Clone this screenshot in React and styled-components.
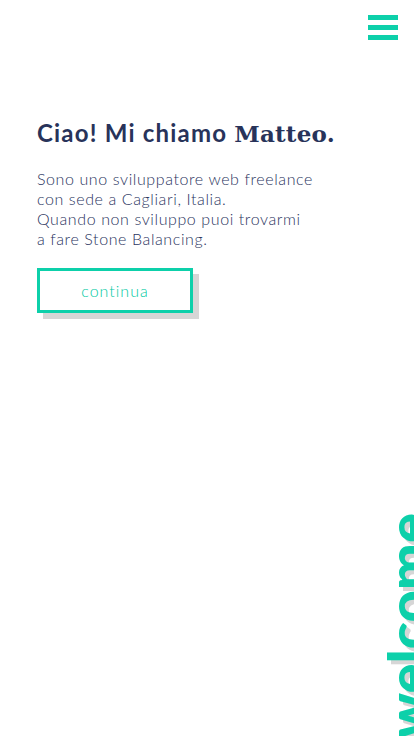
import React from 'react';
import styled, { createGlobalStyle } from 'styled-components';

const teal = '#0dd0aa';
const navy = '#28335a';

const GlobalStyle = createGlobalStyle`
    html, body {
        margin: 0;
        padding: 0;
        background: #ffffff;
        overflow: hidden;
    }
    body {
        font-family: 'Lato', 'Liberation Sans', sans-serif;
    }
`;

const Page = styled.div`
    position: relative;
    width: 414px;
    height: 736px;
    overflow: hidden;
    background: #ffffff;
`;

const Header = styled.header`
    display: flex;
    justify-content: flex-end;
    padding: 15px 16px 0 0;
`;

const Burger = styled.button`
    display: flex;
    flex-direction: column;
    gap: 5px;
    padding: 0;
    border: none;
    background: none;
    cursor: pointer;
`;

const BurgerBar = styled.span`
    display: block;
    width: 30px;
    height: 5px;
    background: ${teal};
`;

const Intro = styled.section`
    display: flex;
    flex-direction: column;
    align-items: flex-start;
    padding: 78px 37px 0;
`;

const Title = styled.h1`
    margin: 0;
    font-family: 'Lato', sans-serif;
    font-weight: 700;
    font-size: 24px;
    line-height: 30px;
    letter-spacing: 1.2px;
    color: ${navy};
`;

const Name = styled.span`
    font-family: 'DejaVu Serif', 'Liberation Serif', serif;
    font-weight: 700;
    font-size: 23px;
    letter-spacing: 0.2px;
`;

const Text = styled.p`
    margin: 20px 0 0;
    font-family: 'Lato Light', 'Lato', sans-serif;
    font-weight: 300;
    font-size: 16px;
    line-height: 20px;
    letter-spacing: 0.6px;
    color: #2a3460;
`;

const Button = styled.button`
    margin-top: 19px;
    width: 156px;
    height: 45px;
    border: 3px solid ${teal};
    background: #ffffff;
    box-shadow: 6px 6px 0 #d6d6d6;
    font-family: 'Lato Light', 'Lato', sans-serif;
    font-weight: 300;
    font-size: 16px;
    letter-spacing: 1px;
    color: #00c9a2;
    cursor: pointer;
`;

const Welcome = styled.div`
    position: absolute;
    right: -21px;
    bottom: -2px;
    writing-mode: vertical-rl;
    transform: rotate(180deg);
    font-family: 'Lato', sans-serif;
    font-weight: 900;
    font-size: 56px;
    line-height: 1;
    color: ${teal};
    text-shadow: -4px 4px 0 #d6d6d6;
`;

export default function App() {
    return (
        <Page>
            <GlobalStyle />
            <Header>
                <Burger aria-label="menu">
                    <BurgerBar />
                    <BurgerBar />
                    <BurgerBar />
                </Burger>
            </Header>
            <Intro>
                <Title>
                    Ciao! Mi chiamo <Name>Matteo.</Name>
                </Title>
                <Text>
                    Sono uno sviluppatore web freelance
                    <br />
                    con sede a Cagliari, Italia.
                    <br />
                    Quando non sviluppo puoi trovarmi
                    <br />a fare Stone Balancing.
                </Text>
                <Button>continua</Button>
            </Intro>
            <Welcome>welcome</Welcome>
        </Page>
    );
}
